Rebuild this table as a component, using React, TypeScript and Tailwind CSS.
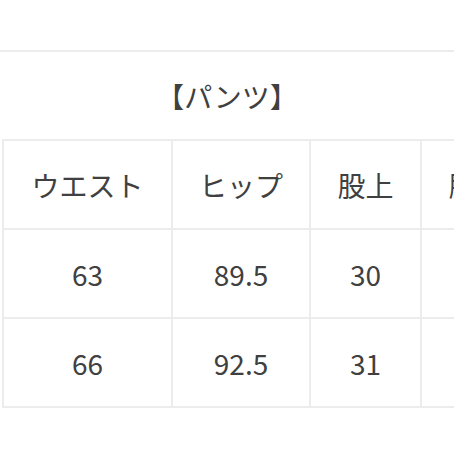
const rows = [
  ['ウエスト', 'ヒップ', '股上', '股下'],
  ['63', '89.5', '30', '66'],
  ['66', '92.5', '31', '67'],
]

const widths = ['w-[169px]', 'w-[138px]', 'w-[111px]', 'w-[111px]']

export default function App() {
  return (
    <div
      className="w-[454px] h-[454px] bg-white overflow-hidden text-[#404040]"
      style={{ fontFamily: '"Noto Sans CJK JP", "Noto Sans", sans-serif' }}
    >
      <div className="h-[50px]" />
      <div className="border-t-2 border-[#ececec] h-[89px] flex items-center justify-center text-[28px]">
        【パンツ】
      </div>
      <div className="ml-[2px] w-[540px]">
        <table className="table-fixed border-collapse">
          <tbody>
            {rows.map((row, i) => (
              <tr key={i} className="h-[89px]">
                {row.map((cell, j) => (
                  <td
                    key={j}
                    className={`${widths[j]} border-2 border-[#ececec] text-center align-middle p-0 text-[28px]`}
                  >
                    {cell}
                  </td>
                ))}
              </tr>
            ))}
          </tbody>
        </table>
      </div>
    </div>
  )
}
